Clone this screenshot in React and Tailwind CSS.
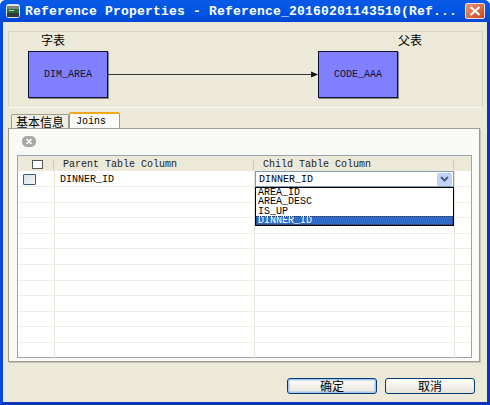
const MONO = "font-['Liberation_Mono','Noto_Sans_CJK_SC',monospace]";
const CJK = "font-['Noto_Sans_CJK_SC','Liberation_Sans',sans-serif]";

const EMPTY_ROWS = Array.from({ length: 11 }, (_, i) => i);
const OPTIONS = ["AREA_ID", "AREA_DESC", "IS_UP", "DINNER_ID"];

function TitleIcon() {
  return (
    <svg width="16" height="16" viewBox="0 0 16 16" className="shrink-0">
      <rect x="1" y="1" width="14" height="14" rx="3" fill="#dfe4e4" />
      <rect x="2" y="3" width="12" height="3" fill="#7d8589" />
      <rect x="2" y="6" width="12" height="4" fill="#2c6a3c" />
      <rect x="2" y="10" width="12" height="4" fill="#33383b" />
      <rect x="4" y="7" width="5" height="1" fill="#a8d8b0" />
    </svg>
  );
}

function TableBox({ name }) {
  return (
    <div className={`flex h-[47px] w-[80px] shrink-0 items-center justify-center border border-[#101030] bg-[#8080ff] text-[10px] text-[#101030] shadow-[1px_1px_0_#8a8a80] ${MONO}`}>
      {name}
    </div>
  );
}

function Arrow() {
  return (
    <svg className="h-[9px] flex-1" viewBox="0 0 211 9" preserveAspectRatio="none">
      <line x1="0" y1="4.5" x2="204" y2="4.5" stroke="#333" strokeWidth="1" />
      <path d="M204 1.5 L211 4.5 L204 7.5 Z" fill="#111" />
    </svg>
  );
}

function DialogButton({ label, active }) {
  return (
    <button className={`flex h-[16px] w-[90px] items-center justify-center rounded-[3px] border border-[#003c74] bg-gradient-to-b from-white to-[#e6e3d8] text-[12px] leading-none text-black ${CJK} ${active ? "shadow-[inset_0_0_0_1.5px_#a9c4ea]" : ""}`}>
      {label}
    </button>
  );
}

export default function App() {
  return (
    <div className="flex h-[405px] w-[490px] flex-col overflow-hidden rounded-t-[6px] bg-[#0a3fd0]">
      {/* title bar */}
      <div className="flex h-[22px] shrink-0 items-center bg-gradient-to-b from-[#0a5ae8] via-[#0055e5] to-[#0246d2] px-[5px]">
        <TitleIcon />
        <span className={`ml-[4px] flex-1 whitespace-pre text-[13px] font-bold leading-none tracking-[0.2px] text-white ${MONO}`}>
          Reference Properties - Reference_20160201143510(Ref...
        </span>
        <div className="flex h-[16px] w-[20px] items-center justify-center rounded-[2px] border border-[#f0e0d8] bg-gradient-to-br from-[#e89478] to-[#c8431c]">
          <svg width="12" height="10" viewBox="0 0 12 10">
            <path d="M1.5 1 L10.5 9 M10.5 1 L1.5 9" stroke="#fff" strokeWidth="2" />
          </svg>
        </div>
      </div>

      {/* dialog body */}
      <div className="flex flex-1 flex-col border-x-[3px] border-b-[3px] border-x-[#0a4adf] border-r-[#0a35b8] border-b-[#0a35b8] bg-[#ece9d8] pl-[5px] pr-[4px] pt-[9px]">
        {/* diagram panel */}
        <div className="h-[77px] shrink-0 rounded-[2px] border border-[#d8d5c4] border-b-[#f8f7f0] pl-[19px] pr-[84px]">
          <div className={`flex h-[19px] justify-between pl-[13px] text-[12px] leading-[15px] text-black ${CJK}`}>
            <span>字表</span>
            <span className="relative left-[24px]">父表</span>
          </div>
          <div className="flex items-center">
            <TableBox name="DIM_AREA" />
            <Arrow />
            <TableBox name="CODE_AAA" />
          </div>
        </div>

        {/* tabs */}
        <div className="mt-[4px] flex h-[16px] shrink-0 items-end pl-[3px]">
          <div className={`flex h-[14px] w-[58px] items-center justify-center rounded-t-[2px] border border-b-0 border-[#9c9c90] bg-[#f0eee2] pt-[1px] text-[12px] leading-none text-black ${CJK}`}>
            基本信息
          </div>
          <div className={`flex h-[16px] w-[51px] items-start justify-start rounded-t-[2px] border-x border-[#9c9c90] border-t-2 border-t-[#f0a81c] bg-[#fbfbf8] pl-[6px] pt-[2px] text-[10px] leading-[11px] text-black ${MONO}`}>
            Joins
          </div>
        </div>

        {/* tab panel */}
        <div className="flex h-[234px] w-[472px] shrink-0 flex-col border border-[#9c9c90] bg-[#f9f9f5] pl-[8px] pr-[7px] shadow-[1px_1px_0_#c8c5b6]">
          <div className="flex h-[26px] shrink-0 items-center pb-[5px] pl-[5px] pt-[3px]">
            <svg width="14" height="11" viewBox="0 0 14 11">
              <rect x="0" y="0" width="14" height="11" rx="5" fill="#a8a8a0" />
              <path d="M4.5 3 L9.5 8 M9.5 3 L4.5 8" stroke="#fff" strokeWidth="1.6" />
            </svg>
          </div>

          {/* table */}
          <div className="h-[203px] w-[455px] shrink-0 overflow-visible border border-[#9aa4b0] bg-white">
            <div className={`grid h-[15px] grid-cols-[35px_200px_200px_1fr] items-center bg-[#ece9d8] pt-[2px] text-[10px] leading-none text-[#222] ${MONO}`}>
              <div className="flex h-full items-center justify-center pl-[4px]">
                <div className="h-[9px] w-[11px] border border-[#555] bg-white" />
              </div>
              <div className="flex h-[11px] items-center border-l border-[#cfccbc] pl-[9px]">Parent Table Column</div>
              <div className="flex h-[11px] items-center border-l border-[#cfccbc] pl-[9px]">Child Table Column</div>
              <div className="h-[11px] border-l border-[#cfccbc]" />
            </div>

            <div className={`grid h-[16px] grid-cols-[36px_200px_200px_1fr] border-b border-[#efeee4] text-[10px] text-black ${MONO}`}>
              <div className="flex items-center pl-[5px]">
                <div className="h-[11px] w-[13px] rounded-[1px] border border-[#3a5a7a] bg-gradient-to-br from-[#d8e0ea] to-[#f6f7f8]" />
              </div>
              <div className="flex items-center border-l border-[#e6e4d8] pl-[5px] pt-[1px]">DINNER_ID</div>
              <div className="relative border-l border-[#e6e4d8]">
                {/* combo box open over the rows */}
                <div className="absolute left-0 top-0 flex h-[16px] w-[199px] items-center border border-[#7f9db9] bg-white pl-[3px]">
                  <span className="flex-1">DINNER_ID</span>
                  <div className="mr-px flex h-[13px] w-[15px] items-center justify-center rounded-[1px] bg-[#c3d3f5]">
                    <svg width="9" height="6" viewBox="0 0 9 6">
                      <path d="M1 1 L4.5 4.5 L8 1" fill="none" stroke="#4d6185" strokeWidth="2" />
                    </svg>
                  </div>
                </div>
                <div className="absolute left-0 top-[16px] z-10 flex h-[39px] w-[199px] flex-col border border-black bg-white leading-[9px]">
                  {OPTIONS.map((o) => (
                    <div key={o} className={`h-[9.25px] pl-[2px] ${o === "DINNER_ID" ? "bg-[#316ac5] text-white outline-dotted outline-1 -outline-offset-1 outline-[#1c3a6c]" : "text-black"}`}>
                      {o}
                    </div>
                  ))}
                </div>
              </div>
              <div className="border-l border-[#e6e4d8]" />
            </div>

            {EMPTY_ROWS.map((i) => (
              <div key={i} className="grid h-[15.6px] grid-cols-[36px_200px_200px_1fr] border-b border-[#efeee4] last:border-b-0">
                <div />
                <div className="border-l border-[#e6e4d8]" />
                <div className="border-l border-[#e6e4d8]" />
                <div className="border-l border-[#e6e4d8]" />
              </div>
            ))}
          </div>
        </div>

        {/* buttons */}
        <div className="mt-[16px] flex justify-end gap-[8px] pr-[8px]">
          <DialogButton label="确定" active />
          <DialogButton label="取消" />
        </div>
      </div>
    </div>
  );
}
